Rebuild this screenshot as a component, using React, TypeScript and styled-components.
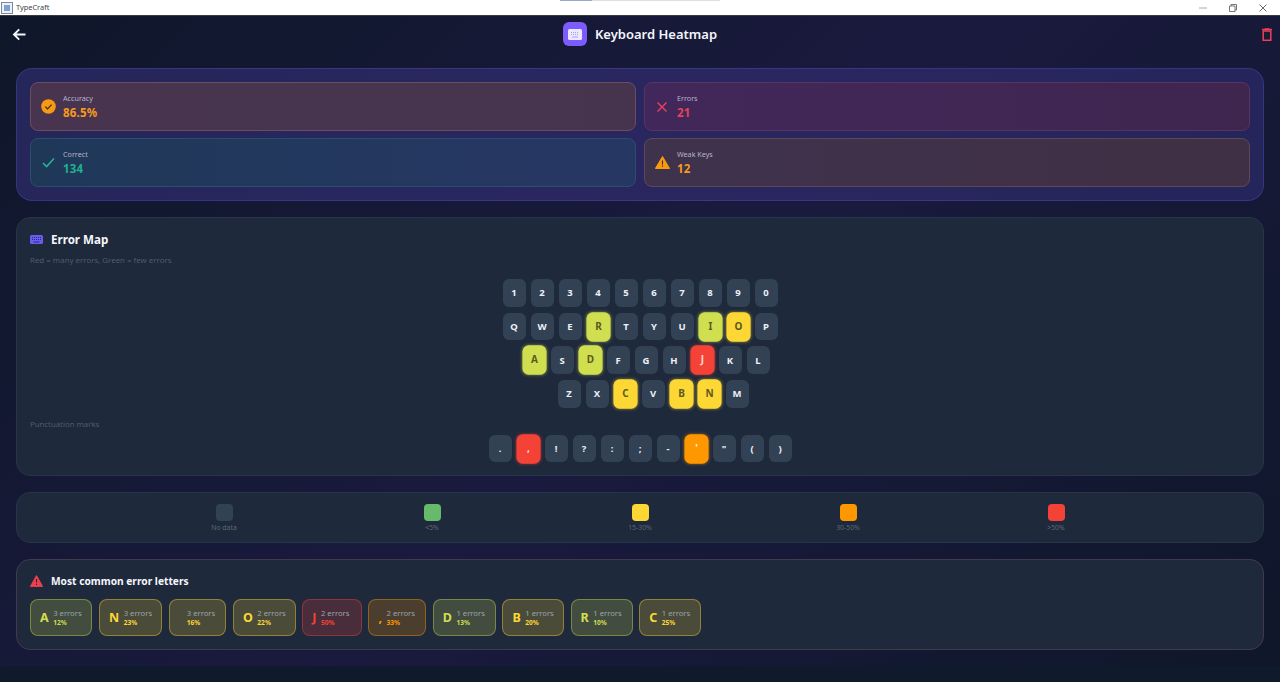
import React from "react";
import styled, { createGlobalStyle } from "styled-components";

const Global = createGlobalStyle`
  html, body { margin: 0; padding: 0; height: 100%; overflow: hidden; }
  body { font-family: "Noto Sans", "Open Sans", sans-serif; background: #0f172a; }
  #root { height: 100%; }
`;

const Window = styled.div`
  width: 1280px; height: 682px; display: flex; flex-direction: column; overflow: hidden;
`;
const TitleBar = styled.div`
  height: 15px; background: #fff; border-bottom: 1px solid #3a3a3a; display: flex; align-items: center;
  flex: none; position: relative;
`;
const AppIcon = styled.svg`width: 12px; height: 12px; margin-left: 1px;`;
const AppName = styled.span`
  font-size: 7.4px; color: #444; margin-left: 3px; line-height: 15px; font-family: "Noto Sans", sans-serif;
`;
const WinControls = styled.div`margin-left: auto; display: flex; align-items: center;`;
const WinBtn = styled.svg`width: 8px; height: 8px; margin-right: 22px; &:last-child { margin-right: 13px; }`;
const TabHint = styled.div`
  position: absolute; left: 560px; top: 0; width: 160px; height: 1px; background: #dde0e4;
  &::before { content: ""; position: absolute; left: 0; top: 0; width: 32px; height: 1px; background: #9aa8c8; }
`;

const Page = styled.div`
  flex: 1; min-height: 0; display: flex; flex-direction: column; overflow: hidden;
  background: linear-gradient(135deg, #0f172a 0%, #1a1a3e 50%, #0f172a 100%);
`;
const Header = styled.header`
  height: 52px; flex: none; display: grid; grid-template-columns: 1fr auto 1fr; align-items: center;
  padding: 0 8px 16px 12px; box-sizing: border-box;
`;
const HeaderSide = styled.div<{ $end?: boolean }>`
  display: flex; align-items: center; justify-content: ${(p) => (p.$end ? "flex-end" : "flex-start")};
`;
const HeaderTitle = styled.div`display: flex; align-items: center; gap: 8px; transform: translateX(-2px);`;
const LogoBox = styled.div`
  width: 24px; height: 24px; border-radius: 6px; background: #7c5cff; display: flex; align-items: center; justify-content: center;
`;
const TitleText = styled.h1`font-size: 13px; font-weight: 600; color: #f4f5fb; margin: 0;`;
const Main = styled.main`display: flex; flex-direction: column; gap: 16px; padding: 0 16px;`;

const StatsPanel = styled.section`
  height: 133px; box-sizing: border-box; border-radius: 16px; padding: 13px;
  border: 1px solid rgba(99,102,241,0.25);
  background: linear-gradient(135deg, #25265a 0%, #2a2760 50%, #24255a 100%);
  display: grid; grid-template-columns: 1fr 1fr; grid-auto-rows: 49px; gap: 7px 8px;
`;
const StatCard = styled.div<{ $bg: string; $border: string }>`
  border-radius: 8px; background: ${(p) => p.$bg}; border: 1px solid ${(p) => p.$border}; box-sizing: border-box;
  display: flex; align-items: center; padding-left: 9px; gap: 7px;
`;
const StatIcon = styled.div`width: 16px; height: 16px; display: flex; align-items: center; justify-content: center; flex: none;`;
const StatBody = styled.div`display: flex; flex-direction: column; gap: 2px;`;
const StatLabel = styled.span`font-size: 7.2px; line-height: 10px; color: #b4b3cc;`;
const StatValue = styled.span<{ $c: string }>`font-size: 11.5px; line-height: 16px; font-weight: 700; color: ${(p) => p.$c}; letter-spacing: 0.2px;`;

const Panel = styled.section`
  box-sizing: border-box; border-radius: 14px; background: #1e293b; border: 1px solid #283449;
`;
const MapPanel = styled(Panel)`height: 259px; padding: 13px 13px 0; display: flex; flex-direction: column;`;
const SectionHead = styled.div`display: flex; align-items: center; gap: 8px; height: 16px;`;
const SectionTitle = styled.h2<{ $size: number }>`font-size: ${(p) => p.$size}px; font-weight: 700; color: #f5f7fb; margin: 0;`;
const Hint = styled.p`font-size: 7.9px; line-height: 10px; color: #4f5c70; margin: 8px 0 0;`;
const KeyRows = styled.div`display: flex; flex-direction: column; gap: 6.2px; align-items: center; margin-top: 14px;`;
const KeyRow = styled.div<{ $offset?: number }>`display: flex; gap: 5px; margin-left: ${(p) => p.$offset ?? 0}px;`;
const Key = styled.div<{ $c?: string }>`
  width: 23px; height: 27.5px; box-sizing: border-box; border-radius: 6px; display: flex; align-items: center; justify-content: center;
  font-size: 9.5px; font-weight: 700;
  background: ${(p) => p.$c ?? "#334155"}; color: ${(p) => (p.$c ? (p.$c === "#f44336" ? "#f5dcd8" : p.$c === "#ff9800" ? "#fff0d8" : "#5a5a24") : "#eef1f6")};
  ${(p) => (p.$c ? `box-shadow: 0 0 3px ${p.$c}88; transform: scale(1.05);` : "")}
`;
const PunctLabel = styled.p`font-size: 7.8px; line-height: 10px; color: #4f5c70; margin: 11.4px 0 0;`;
const PunctRow = styled(KeyRow)`align-self: center; margin-top: 6px;`;

const LegendPanel = styled(Panel)`
  height: 51px; display: grid; grid-template-columns: repeat(5, 1fr); padding: 0 103px; align-items: center;
`;
const LegendItem = styled.div`display: flex; flex-direction: column; align-items: center; gap: 2px;`;
const Swatch = styled.div<{ $c: string }>`width: 17px; height: 17px; border-radius: 4px; background: ${(p) => p.$c};`;
const LegendText = styled.span`font-size: 6.9px; line-height: 9px; color: #5b6779;`;

const CommonPanel = styled(Panel)`
  height: 91px; padding: 13px 13px 0; border-color: #43394e;
`;
const Chips = styled.div`display: flex; gap: 6.7px; margin-top: 10px;`;
const Chip = styled.div<{ $c: string; $w: number }>`
  width: ${(p) => p.$w}px; height: 36.5px; box-sizing: border-box; border-radius: 8px; display: flex; align-items: center; padding-left: 9px; gap: 4.5px;
  background: ${(p) => p.$c}33; border: 1px solid ${(p) => p.$c}66;
`;
const ChipLetter = styled.span<{ $c: string }>`font-size: 12.5px; font-weight: 700; color: ${(p) => p.$c};`;
const ChipBody = styled.div`display: flex; flex-direction: column; margin-top: 1px;`;
const ChipCount = styled.span`font-size: 7.7px; line-height: 10px; color: #9ba3ad;`;
const ChipPct = styled.span<{ $c: string }>`font-size: 6.6px; line-height: 10px; font-weight: 700; color: ${(p) => p.$c};`;
const Footer = styled.div`flex: 1; margin-top: 16px; background: #0f1a2c;`;

const G = "#d0df50", Y = "#fdd835", O = "#ff9800", R = "#f44336";
const hot: Record<string, string> = { R: G, I: G, O: Y, A: G, D: G, J: R, C: Y, B: Y, N: Y };
const rows: { keys: string; offset: number }[] = [
  { keys: "1234567890", offset: 0 },
  { keys: "QWERTYUIOP", offset: 0 },
  { keys: "ASDFGHJKL", offset: 12 },
  { keys: "ZXCVBNM", offset: 26 },
];
const punct: { k: string; c?: string }[] = [
  { k: "." }, { k: ",", c: R }, { k: "!" }, { k: "?" }, { k: ":" }, { k: ";" }, { k: "-" }, { k: "'", c: O }, { k: '"' }, { k: "(" }, { k: ")" },
];
const legend = [
  { c: "#334155", t: "No data" }, { c: "#66bb6a", t: "<5%" }, { c: "#fdd835", t: "15-30%" }, { c: "#ff9800", t: "30-50%" }, { c: "#f44336", t: ">50%" },
];
const chips = [
  { l: "A", n: 3, p: 12, c: G, w: 62.3 }, { l: "N", n: 3, p: 23, c: Y, w: 63.3 }, { l: "\u00a0", n: 3, p: 16, c: Y, w: 57.3 }, { l: "O", n: 2, p: 22, c: Y, w: 62.7 },
  { l: "J", n: 2, p: 50, c: R, w: 59.4 }, { l: ",", n: 2, p: 33, c: O, w: 57.7 }, { l: "D", n: 1, p: 13, c: G, w: 63 }, { l: "B", n: 1, p: 20, c: Y, w: 61.4 },
  { l: "R", n: 1, p: 10, c: G, w: 62 }, { l: "C", n: 1, p: 25, c: Y, w: 61.7 },
];

export default function App() {
  return (
    <Window>
      <Global />
      <TitleBar>
        <AppIcon viewBox="0 0 12 12"><rect x="0.5" y="0.5" width="11" height="11" fill="#eef2f8" stroke="#7a8aa0" /><rect x="3" y="3" width="6" height="6" fill="#7f9fd0" /></AppIcon>
        <AppName>TypeCraft</AppName>
        <TabHint />
        <WinControls>
          <WinBtn viewBox="0 0 8 8"><path d="M0 4h8" stroke="#aaa" strokeWidth="1" /></WinBtn>
          <WinBtn viewBox="0 0 8 8"><path d="M.5 2h5.5v5.5H.5zM2 2V.5h5.5V6H6" fill="none" stroke="#555" strokeWidth=".8" /></WinBtn>
          <WinBtn viewBox="0 0 8 8"><path d="M.5.5l7 7M7.5.5l-7 7" stroke="#444" strokeWidth=".8" /></WinBtn>
        </WinControls>
      </TitleBar>
      <Page>
        <Header>
          <HeaderSide>
            <svg width="14" height="13" viewBox="0 0 14 13" fill="none" stroke="#f5f7ff" strokeWidth="1.9"><path d="M13.5 6.5H2.5M7.2 1.4 2 6.5l5.2 5.1" /></svg>
          </HeaderSide>
          <HeaderTitle>
            <LogoBox>
              <svg width="14" height="11" viewBox="0 0 14 11"><rect width="14" height="11" rx="1.5" fill="#ece8ff" /><path d="M3 3.5h8M3 5.5h8" stroke="#a99cf0" strokeWidth="1" strokeDasharray="1 1" /><path d="M4 8h6" stroke="#a99cf0" strokeWidth="1" /></svg>
            </LogoBox>
            <TitleText>Keyboard Heatmap</TitleText>
          </HeaderTitle>
          <HeaderSide $end>
            <svg width="10" height="13" viewBox="0 0 10 13" fill="none" stroke="#ef4058"><path d="M0 1.5h10" strokeWidth="1.4" /><path d="M3 1V.4h4V1" strokeWidth=".8" /><rect x="1.2" y="3" width="7.6" height="9.3" strokeWidth="1.5" fill="#1a1a30" /></svg>
          </HeaderSide>
        </Header>
        <Main>
          <StatsPanel>
            <StatCard $bg="linear-gradient(90deg,#48344e,#46344e)" $border="#6c4d5c">
              <StatIcon><svg width="15" height="15" viewBox="0 0 15 15"><circle cx="7.5" cy="7.5" r="7.3" fill="#f79a12" /><path d="M4.2 7.6 6.5 9.8 10.6 5.6" stroke="#3a2a20" strokeWidth="1.2" fill="none" /></svg></StatIcon>
              <StatBody><StatLabel>Accuracy</StatLabel><StatValue $c="#f79a1e">86.5%</StatValue></StatBody>
            </StatCard>
            <StatCard $bg="linear-gradient(90deg,#42285a,#3e264f)" $border="#5a3360">
              <StatIcon><svg width="12" height="12" viewBox="0 0 12 12" stroke="#e8425c" strokeWidth="1.4"><path d="M1.5 1.5l9 9M10.5 1.5l-9 9" /></svg></StatIcon>
              <StatBody><StatLabel>Errors</StatLabel><StatValue $c="#e8425c">21</StatValue></StatBody>
            </StatCard>
            <StatCard $bg="linear-gradient(90deg,#1f3858,#273764)" $border="#2a4f6c">
              <StatIcon><svg width="13" height="11" viewBox="0 0 13 11" fill="none" stroke="#1fb893" strokeWidth="1.5"><path d="M1 6l3.6 3.6L12 1.5" /></svg></StatIcon>
              <StatBody><StatLabel>Correct</StatLabel><StatValue $c="#1fb08c">134</StatValue></StatBody>
            </StatCard>
            <StatCard $bg="linear-gradient(90deg,#3f324d,#403045)" $border="#5f4854">
              <StatIcon><svg width="15" height="13" viewBox="0 0 15 13"><path d="M7.5.5 14.6 12.5H.4z" fill="#f79a12" stroke="#f79a12" strokeLinejoin="round" /><path d="M7.5 4.5v4M7.5 9.6v1.2" stroke="#3a2a20" strokeWidth="1.1" /></svg></StatIcon>
              <StatBody><StatLabel>Weak Keys</StatLabel><StatValue $c="#f79a1e">12</StatValue></StatBody>
            </StatCard>
          </StatsPanel>

          <MapPanel>
            <SectionHead>
              <svg width="13" height="9" viewBox="0 0 13 9"><rect width="13" height="9" rx="1.5" fill="#6a5cf0" /><path d="M2 2.5h9M2 4.5h9" stroke="#2a2a70" strokeWidth="1" strokeDasharray="1 1" /><path d="M3.5 7h6" stroke="#2a2a70" strokeWidth="1" /></svg>
              <SectionTitle $size={11.6}>Error Map</SectionTitle>
            </SectionHead>
            <Hint>Red = many errors, Green = few errors</Hint>
            <KeyRows>
              {rows.map((r) => (
                <KeyRow key={r.keys} $offset={r.offset}>
                  {r.keys.split("").map((k) => <Key key={k} $c={hot[k]}>{k}</Key>)}
                </KeyRow>
              ))}
            </KeyRows>
            <PunctLabel>Punctuation marks</PunctLabel>
            <PunctRow>
              {punct.map((p) => <Key key={p.k} $c={p.c}>{p.k}</Key>)}
            </PunctRow>
          </MapPanel>

          <LegendPanel>
            {legend.map((l) => (
              <LegendItem key={l.t}><Swatch $c={l.c} /><LegendText>{l.t}</LegendText></LegendItem>
            ))}
          </LegendPanel>

          <CommonPanel>
            <SectionHead>
              <svg width="13" height="12" viewBox="0 0 13 12"><path d="M6.5.6 12.6 11.4H.4z" fill="#ef4050" stroke="#ef4050" strokeLinejoin="round" /><path d="M6.5 4v3.6M6.5 8.7v1.2" stroke="#26253a" strokeWidth="1.1" /></svg>
              <SectionTitle $size={10.2}>Most common error letters</SectionTitle>
            </SectionHead>
            <Chips>
              {chips.map((c) => (
                <Chip key={c.l + c.p} $c={c.c} $w={c.w}>
                  <ChipLetter $c={c.c}>{c.l}</ChipLetter>
                  <ChipBody><ChipCount>{c.n} errors</ChipCount><ChipPct $c={c.c}>{c.p}%</ChipPct></ChipBody>
                </Chip>
              ))}
            </Chips>
          </CommonPanel>
        </Main>
        <Footer />
      </Page>
    </Window>
  );
}
